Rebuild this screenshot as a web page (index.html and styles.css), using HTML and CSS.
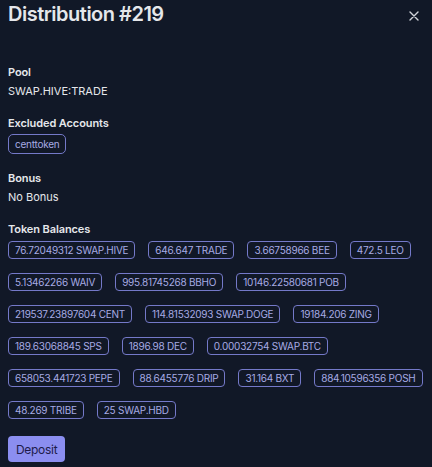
FILE: index.html
```html
<!DOCTYPE html>
<html lang="en">
<head>
<meta charset="utf-8">
<title>Distribution #219</title>
<link rel="stylesheet" href="styles.css">
</head>
<body>
<div class="modal">
  <header class="head">
    <h1 class="title">Distribution #219</h1>
    <button class="close" aria-label="Close">
      <svg width="10" height="10" viewBox="0 0 10 10"><path d="M1 1L9 9M9 1L1 9" stroke="currentColor" stroke-width="1.4" stroke-linecap="round"/></svg>
    </button>
  </header>
  <section class="sec first">
    <div class="label">Pool</div>
    <div class="value">SWAP.HIVE:TRADE</div>
  </section>
  <section class="sec">
    <div class="label">Excluded Accounts</div>
    <div class="badges"><span class="badge acc">centtoken</span></div>
  </section>
  <section class="sec">
    <div class="label">Bonus</div>
    <div class="value">No Bonus</div>
  </section>
  <section class="sec">
    <div class="label">Token Balances</div>
    <div class="badges tokens">
      <span class="badge">76.72049312 SWAP.HIVE</span>
      <span class="badge">646.647 TRADE</span>
      <span class="badge">3.66758966 BEE</span>
      <span class="badge">472.5 LEO</span>
      <span class="badge">5.13462266 WAIV</span>
      <span class="badge">995.81745268 BBHO</span>
      <span class="badge">10146.22580681 POB</span>
      <span class="badge">219537.23897604 CENT</span>
      <span class="badge">114.81532093 SWAP.DOGE</span>
      <span class="badge">19184.206 ZING</span>
      <span class="badge">189.63068845 SPS</span>
      <span class="badge">1896.98 DEC</span>
      <span class="badge">0.00032754 SWAP.BTC</span>
      <span class="badge">658053.441723 PEPE</span>
      <span class="badge">88.6455776 DRIP</span>
      <span class="badge">31.164 BXT</span>
      <span class="badge">884.10596356 POSH</span>
      <span class="badge">48.269 TRIBE</span>
      <span class="badge">25 SWAP.HBD</span>
    </div>
  </section>
  <div class="actions">
    <button class="deposit">Deposit</button>
  </div>
</div>
</body>
</html>
```
FILE: styles.css
```css
html, body {
  margin: 0;
  padding: 0;
  background: #111827;
}
body {
  font-family: Inter, "Noto Sans", sans-serif;
  color: #e5e7eb;
}
.modal {
  padding: 0 8px;
}
.head {
  display: flex;
  justify-content: space-between;
  align-items: flex-start;
  height: 28px;
}
.title {
  margin: 0;
  font-size: 20px;
  line-height: 28px;
  font-weight: 600;
  letter-spacing: -0.5px;
  color: #e5e7eb;
}
.close {
  background: none;
  border: 0;
  padding: 0;
  margin: 11px 5px 0 0;
  width: 10px;
  height: 10px;
  color: #d1d5db;
  display: flex;
}
.sec {
  margin-top: 16px;
}
.sec.first {
  margin-top: 36px;
}
.label {
  font-size: 11px;
  line-height: 16px;
  font-weight: 600;
  letter-spacing: -0.1px;
  color: #e5e7eb;
}
.value {
  margin-top: 3px;
  font-size: 11px;
  line-height: 16px;
  color: #e5e7eb;
}
.badges {
  display: flex;
  flex-wrap: wrap;
  gap: 14px 13px;
  margin-top: 3px;
}
.tokens {
  margin-top: 4px;
}
.badge {
  display: inline-block;
  border: 1px solid #7479c9;
  border-radius: 4px;
  padding: 0 6px;
  height: 16px;
  line-height: 16px;
  font-size: 10px;
  letter-spacing: -0.25px;
  color: #a7abe4;
}
.badge.acc {
  height: 18px;
  line-height: 18px;
  border-radius: 5px;
}
.actions {
  margin-top: 17px;
}
.deposit {
  font-family: Inter, "Noto Sans", sans-serif;
  background: #8b8ef0;
  border: 0;
  border-radius: 4px;
  padding: 0 8px;
  height: 26px;
  font-size: 12px;
  letter-spacing: -0.3px;
  color: #1e1b4b;
}
```
